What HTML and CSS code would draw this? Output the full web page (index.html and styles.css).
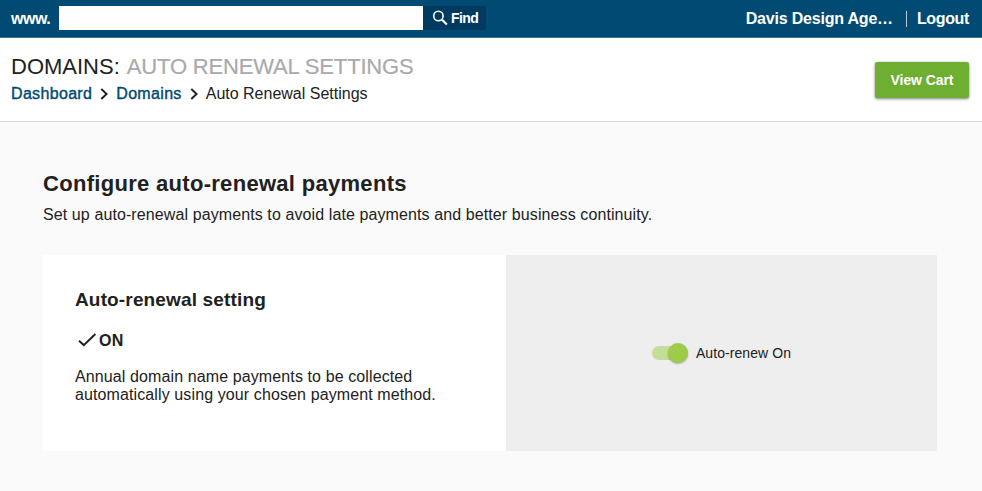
FILE: index.html
```html
<!DOCTYPE html>
<html lang="en">
<head>
<meta charset="utf-8">
<title>Auto Renewal Settings</title>
<link rel="stylesheet" href="styles.css">
</head>
<body>
<header class="topbar">
  <form class="search">
    <label class="search-label" for="domain">www.</label>
    <input class="search-input" id="domain" type="text">
    <button class="search-button" type="button">
      <svg class="search-icon" width="16" height="16" viewBox="0 0 16 16" fill="none" stroke="currentColor"><circle cx="6.4" cy="6" r="4.7" stroke-width="1.6"/><path d="M9.8 9.4 14.9 14.5" stroke-width="2.1"/></svg>
      <span class="find-text">Find</span>
    </button>
  </form>
  <nav class="account">
    <a class="account-name">Davis Design Age…</a>
    <span class="divider"></span>
    <a class="logout">Logout</a>
  </nav>
</header>
<section class="page-header">
  <div>
    <h1 class="page-title"><span class="title-section">DOMAINS:</span> <span class="title-current">AUTO RENEWAL SETTINGS</span></h1>
    <nav class="breadcrumb">
      <a class="crumb crumb-dashboard">Dashboard</a>
      <svg class="chevron" width="8" height="12" viewBox="0 0 8 12"><path d="M1.3 1.1 6.6 6 1.3 10.9"/></svg>
      <a class="crumb crumb-domains">Domains</a>
      <svg class="chevron" width="8" height="12" viewBox="0 0 8 12"><path d="M1.3 1.1 6.6 6 1.3 10.9"/></svg>
      <span class="crumb-current">Auto Renewal Settings</span>
    </nav>
  </div>
  <button class="cart-button" type="button">View Cart</button>
</section>
<main class="content">
  <h2 class="heading">Configure auto-renewal payments</h2>
  <p class="intro">Set up auto-renewal payments to avoid late payments and better business continuity.</p>
  <div class="card">
    <div class="card-info">
      <h3 class="card-title">Auto-renewal setting</h3>
      <div class="status">
        <svg class="check" width="24" height="18" viewBox="0 0 24 18"><path d="M4 8.7 8.8 13.1 20.4 2"/></svg>
        <span class="status-text">ON</span>
      </div>
      <p class="description"><span class="line-one">Annual domain name payments to be collected</span><br><span class="line-two">automatically using your chosen payment method.</span></p>
    </div>
    <div class="card-action">
      <span class="toggle" role="switch" aria-checked="true"><span class="knob"></span></span>
      <span class="toggle-label">Auto-renew On</span>
    </div>
  </div>
</main>
</body>
</html>
```

FILE: styles.css
```css
* { box-sizing: border-box; }
body {
  margin: 0;
  background: #fafafa;
  color: #212121;
  font-family: "Liberation Sans", Arial, sans-serif;
  font-size: 16px;
  height: 491px;
  overflow: hidden;
}
h1, h2, h3, p { margin: 0; }
a, span, label { white-space: nowrap; }
.topbar {
  height: 38px;
  background: #004a73;
  border-bottom: 1px solid #417596;
  color: #fff;
  display: flex;
  justify-content: space-between;
  padding: 0 13px 0 11px;
}
.search { display: flex; align-items: center; height: 36px; }
.search-label { width: 48px; padding-top: 2px; font-weight: bold; font-size: 16px; line-height: 18px; letter-spacing: -.5px; }
.search-input { width: 364px; height: 24px; border: 0; padding: 0; background: #fff; }
.search-button {
  width: 63px;
  height: 24px;
  border: 0;
  padding: 0 0 0 9px;
  background: #003a61;
  color: #fff;
  font: bold 14px/24px "Liberation Sans", Arial, sans-serif;
  letter-spacing: -.6px;
  display: flex;
  align-items: center;
  gap: 3px;
}
.account { display: flex; align-items: center; height: 37px; font-weight: bold; font-size: 16px; letter-spacing: -.2px; }
.logout { letter-spacing: -.35px; }
.divider { width: 1px; height: 16px; margin: 1px 10px 0 13px; background: #b9ccd8; }
.page-header {
  height: 84px;
  background: #fff;
  border-bottom: 1px solid #d5d5d5;
  display: flex;
  justify-content: space-between;
  padding: 15px 13px 0 11px;
}
.page-title { font-weight: normal; font-size: 22px; line-height: 28px; display: flex; gap: 7px; }
.title-current { color: #aaa; letter-spacing: -.16px; -webkit-text-stroke: .2px #aaa; }
.breadcrumb { display: flex; align-items: center; gap: 8px; margin-top: 3px; line-height: 19px; }
.crumb { color: #004a73; letter-spacing: .33px; -webkit-text-stroke: .4px #004a73; }
.chevron { fill: none; stroke: #212121; stroke-width: 2; }
.cart-button {
  width: 94px;
  height: 36px;
  margin-top: 9px;
  border: 0;
  border-radius: 2px;
  padding: 0;
  background: #6eae30;
  box-shadow: 0 1px 3px rgba(0,0,0,.5);
  color: #fff;
  font: bold 14px "Liberation Sans", Arial, sans-serif;
  letter-spacing: -.08px;
}
.content { padding: 47px 45px 0 43px; }
.heading { font-size: 22px; line-height: 30px; letter-spacing: .3px; }
.intro { margin-top: 6px; line-height: 20px; letter-spacing: .1px; }
.card { display: flex; height: 196px; margin-top: 30px; }
.card-info { width: 463px; background: #fff; padding: 33px 32px; }
.card-title { font-size: 19px; line-height: 24px; letter-spacing: .15px; }
.status { display: flex; align-items: center; height: 20px; margin-top: 19px; font-weight: bold; letter-spacing: .2px; }
.check { fill: none; stroke: #212121; stroke-width: 2; }
.description { margin-top: 17px; line-height: 18px; letter-spacing: .11px; }
.card-action { flex: 1; background: #eee; display: flex; align-items: center; justify-content: center; gap: 8px; font-size: 14px; letter-spacing: .08px; }
.toggle { width: 36px; height: 14px; border-radius: 7px; background: #c5de97; display: flex; align-items: center; justify-content: flex-end; }
.knob { width: 20px; height: 20px; border-radius: 50%; background: #9ccc48; box-shadow: 0 1px 2px rgba(0,0,0,.3); flex: none; }
```
